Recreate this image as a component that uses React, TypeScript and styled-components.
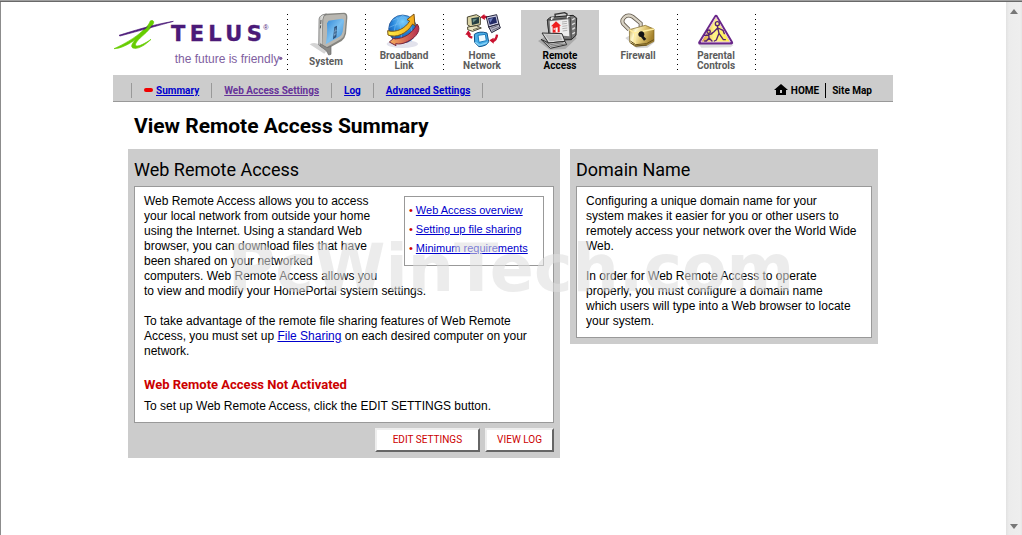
import React from "react";
import styled, { createGlobalStyle } from "styled-components";

const narrow = `Roboto, "Liberation Sans", sans-serif`;
const sans = `"Liberation Sans", Arial, sans-serif`;

const GlobalStyle = createGlobalStyle`
  * { box-sizing: border-box; }
  body { margin: 0; background: #fff; color: #000; font: 12px/15px ${sans}; }
  h1, h2, h3, p, ul { margin: 0; padding: 0; }
  a { color: #0000cc; }
`;

const Shell = styled.div`
  position: relative;
  display: flex;
  min-height: 100vh;
  border-top: 1px solid #a0a0a0;
`;

const Viewport = styled.div`
  flex: 1;
  min-width: 0;
  border-top: 1px solid #696969;
  box-shadow: inset 1px 0 #8c8c8c;
`;

const ScrollTrack = styled.div`
  display: flex;
  flex-direction: column;
  justify-content: space-between;
  align-items: center;
  width: 16px;
  padding: 7px 0 6px;
  border-top: 1px solid #696969;
  background: linear-gradient(90deg, #e2e2e2, #ececec 3px, #eeeeee 14px, #e6e6e6);
`;

const Page = styled.div`
  max-width: 780px;
  margin: 0 auto;
  padding-top: 8px;
`;

const Header = styled.header`
  display: flex;
  height: 65px;
`;

const Brand = styled.a`
  flex: 0 0 174px;
  color: inherit;
`;

const dots = `repeating-linear-gradient(#000 0 1px, transparent 1px 5px)`;

const Tabs = styled.nav`
  display: flex;
`;

const Tab = styled.a<{ $active?: boolean; $plain?: boolean }>`
  display: flex;
  flex-direction: column;
  align-items: center;
  width: 78px;
  padding-top: 2px;
  color: ${(p) => (p.$active ? "#000" : "#5c5c5c")};
  background: ${(p) =>
    p.$active ? "#ccc" : p.$plain ? "none" : `${dots} 0 4px / 1px 56px no-repeat`};
  font: bold 10px/10px ${narrow};
  text-align: center;
  text-decoration: none;
  white-space: pre-line;
`;

const TabsEnd = styled.span`
  width: 1px;
  background: ${dots} 0 4px / 1px 56px no-repeat;
`;

const NavBar = styled.nav`
  display: flex;
  align-items: center;
  justify-content: space-between;
  height: 27px;
  padding: 0 21px 0 18px;
  border-bottom: 1px solid #999;
  background: #ccc;
  font: bold 10px/15px ${narrow};
`;

const NavGroup = styled.div`
  display: flex;
  align-items: center;
  padding-top: 4px;
`;

const NavItem = styled.span`
  display: flex;
  align-items: center;
  gap: 3px;
  padding: 0 12px;
  border-left: 1px solid #999;

  &:last-child {
    border-right: 1px solid #999;
  }
`;

const NavLink = styled.a<{ $visited?: boolean }>`
  color: ${(p) => (p.$visited ? "#663399" : "#0000cc")};
`;

const Marker = styled.span`
  width: 9px;
  height: 4px;
  border-radius: 2px;
  background: #f00000;
`;

const SideLink = styled.a`
  display: flex;
  align-items: center;
  gap: 3px;
  padding: 0 6px;
  color: #000;
  text-decoration: none;

  & + & {
    padding-right: 0;
    border-left: 1px solid #000;
  }
`;

const Content = styled.main`
  padding: 8px 15px;
`;

const Title = styled.h1`
  padding: 1px 0 0 6px;
  font: bold 21px/30px ${narrow};
`;

const Columns = styled.div`
  display: grid;
  grid-template-columns: 432fr 308fr;
  align-items: start;
  gap: 10px;
  padding-top: 8px;
`;

const Panel = styled.section`
  padding: 6px;
  background: #ccc;
`;

const PanelTitle = styled.h2`
  padding: 1px 0 3px;
  font: 18px/27px ${narrow};
`;

const Box = styled.div`
  padding: 7px 9px 8px;
  border: 1px solid #999;
  background: #fff;
`;

const Text = styled.p`
  & + & {
    padding-top: 15px;
  }
`;

const Alert = styled.h3`
  padding: 17px 0 6px;
  color: #cc0000;
  font: bold 13px/17px ${narrow};
`;

const LinkList = styled.ul`
  float: right;
  width: 140px;
  height: 70px;
  margin: 2px 0 0 12px;
  padding: 4px;
  border: 1px solid #999;
  font-size: 11px;
  line-height: 19px;
  list-style: none;
`;

const LinkRow = styled.li`
  display: flex;
  gap: 3px;

  &::before {
    content: "•";
    color: #cc0000;
  }
`;

const Actions = styled.div`
  display: flex;
  justify-content: flex-end;
  gap: 5px;
  padding-top: 5px;
`;

const Button = styled.button`
  height: 24px;
  padding: 0 16px;
  border: 2px solid;
  border-color: #eee #666 #666 #eee;
  background: #fff;
  color: #cc0000;
  font: 10px/18px ${narrow};

  & + & {
    padding: 0 10px;
  }
`;

const Watermark = styled.div`
  position: absolute;
  top: 229px;
  left: 0;
  right: 0;
  color: rgba(221, 221, 221, 0.56);
  font: bold 65px/78px "DejaVu Sans", sans-serif;
  text-align: center;
  pointer-events: none;
`;

const Logo = () => (
  <svg width="174" height="64" viewBox="15 15 522 192" role="img" aria-label="TELUS">
    <path
      d="M18 131 C32 125 70 106 94 86 C112 71 124 58 126 49 C129 45 136 46 137 50 C139 57 121 78 102 94 C84 110 78 121 86 123 C95 124 111 115 129 103 C115 117 94 132 79 130 C66 129 70 116 84 102 C63 118 38 131 18 131 Z"
      fill="#66cc00"
      stroke="#66cc00"
      strokeWidth="2"
    />
    <path d="M33 91 C75 78 130 60 196 49 C150 62 95 77 36 93 Z" fill="#4b1a78" stroke="#4b1a78" strokeWidth="2" />
    <path d="M104 84 C120 70 132 57 133 50" fill="none" stroke="#66cc00" strokeWidth="7" />
    <text x="189" y="109" fill="#4b1a78" stroke="#4b1a78" strokeWidth="1" fontFamily="DejaVu Sans" fontWeight="bold" fontSize="63" letterSpacing="13">
      TELUS
    </text>
    <text x="466" y="76" fill="#4b1a78" fontFamily="Liberation Sans" fontSize="21">
      ®
    </text>
    <text x="200" y="173" fill="#80609f" fontFamily="Liberation Sans" fontSize="36">
      the future is friendly
    </text>
    <circle cx="518" cy="160" r="5" fill="#80609f" />
  </svg>
);

const SystemIcon = () => (
  <svg width="48" height="45" viewBox="51 21 144 135">
    <defs>
      <linearGradient id="sysFace" x1="0" y1="0" x2="1" y2="1">
        <stop offset="0" stopColor="#2d86d8" />
        <stop offset="0.5" stopColor="#7cc0f0" />
        <stop offset="1" stopColor="#3487d2" />
      </linearGradient>
      <linearGradient id="sysSide">
        <stop offset="0" stopColor="#b5b5b3" />
        <stop offset="0.5" stopColor="#e2e2df" />
        <stop offset="1" stopColor="#868684" />
      </linearGradient>
    </defs>
    <path d="M74 118 Q92 108 110 124 L128 134 L118 146 Z" fill="#d4d4d4" />
    <path d="M103 42 Q104 30 121 26 L178 23 Q188 24 187 38 L183 86 Q180 100 170 108 L131 130 L104 122 Z" fill="#858580" />
    <path d="M102 42 Q104 29 124 27 Q114 32 113 46 L112 127 L101 120 Z" fill="url(#sysSide)" stroke="#777" strokeWidth="2" />
    <path d="M123 31 L175 27 Q184 27 183 38 L179 84 Q177 96 168 102 L126 126 L112 122 L115 43 Q116 33 123 31 Z" fill="#b9b7b1" />
    <path d="M131 47 L171 41 Q178 42 177 50 L173 80 Q171 90 163 95 L122 118 Q128 92 126 55 Z" fill="url(#sysFace)" />
    <path d="M148 66 L156 62 L154 96 L144 103 Z" fill="#2c4f78" />
    <path d="M151 70 L149 94 M148 79 L155 76 M146 90 L154 86" stroke="#8ebbe0" strokeWidth="2" />
    <path d="M106 116 L126 128 L138 124 L138 148 L131 150 L124 137 L106 124 Z" fill="#8a8a87" stroke="#666" strokeWidth="2" />
    <path d="M108 45 L107 57 M107 61 L106 70" stroke="#555" strokeWidth="3" />
  </svg>
);

const BroadbandIcon = () => (
  <svg width="48" height="39" viewBox="285 21 144 117">
    <defs>
      <radialGradient id="globe" cx="0.5" cy="0.25" r="0.75">
        <stop offset="0" stopColor="#7cd2ff" />
        <stop offset="0.5" stopColor="#2584da" />
        <stop offset="1" stopColor="#123f93" />
      </radialGradient>
      <linearGradient id="gold">
        <stop offset="0" stopColor="#ffec45" />
        <stop offset="1" stopColor="#f4a819" />
      </linearGradient>
      <linearGradient id="coral">
        <stop offset="0" stopColor="#f8b05c" />
        <stop offset="1" stopColor="#b62c4f" />
      </linearGradient>
    </defs>
    <ellipse cx="352" cy="117" rx="47" ry="12" fill="#e2e2ec" />
    <circle cx="353" cy="72" r="42" fill="url(#globe)" stroke="#23508f" strokeWidth="2" />
    <path d="M313 67 Q353 45 394 60 M322 46 Q354 30 382 44 M353 31 Q320 60 328 108 M353 31 Q389 55 378 110 M335 36 Q356 70 346 115" fill="none" stroke="#74baf0" strokeWidth="2" />
    <path d="M308 77 C335 84 361 70 374 48 L366 44 L387 27 L390 63 L383 57 C366 87 332 100 309 90 Z" fill="url(#gold)" stroke="#7b5315" strokeWidth="3" strokeLinejoin="round" />
    <path d="M313 111 L328 98 L329 102 C358 100 382 86 396 57 C410 72 397 96 367 110 C353 117 342 118 332 116 L333 122 Z" fill="url(#coral)" stroke="#7a263a" strokeWidth="3" strokeLinejoin="round" />
  </svg>
);

const NetworkIcon = () => (
  <svg width="48" height="39" viewBox="54 21 144 117">
    <g fill="none" stroke="#c9122f" strokeWidth="7">
      <path d="M128 36 Q141 33 147 42" />
      <path d="M85 84 Q84 95 97 98" />
      <path d="M171 89 Q170 104 158 109" />
    </g>
    <path d="M121 37 L133 27 L135 45 Z M76 89 L85 76 L94 89 Z M148 106 L161 98 L161 116 Z" fill="#c9122f" />
    <path d="M82 36 L109 29 L121 36 L121 59 L93 66 L82 59 Z" fill="#d9d3a4" stroke="#4b4834" strokeWidth="3" />
    <path d="M94 40 L117 36 L117 55 L96 60 Z" fill="#263f42" />
    <path d="M98 43 L112 41 L99 53 Z" fill="#698f88" />
    <path d="M83 66 L109 62 L124 69 L98 79 L83 74 Z" fill="#e9e4bf" stroke="#4b4834" strokeWidth="3" />
    <path d="M99 74 L118 68" stroke="#77735a" strokeWidth="3" />
    <path d="M139 36 L170 29 L177 57 L146 66 Z" fill="#cdcde2" stroke="#24243b" strokeWidth="3" />
    <path d="M144 40 L167 35 L171 53 L149 59 Z" fill="#222a66" />
    <path d="M147 42 L159 39 L151 53 Z" fill="#7182c0" />
    <path d="M146 66 L177 57 L181 69 L155 83 Z" fill="#b8b8c9" stroke="#24243b" strokeWidth="3" />
    <path d="M152 70 L173 62 M156 76 L177 67" stroke="#4b4b5b" strokeWidth="2" />
    <path d="M103 88 Q118 77 141 84 L146 110 Q141 123 117 125 L104 112 Z" fill="#49aee8" stroke="#135389" strokeWidth="3" />
    <path d="M114 91 L136 88 L139 107 L117 112 Z" fill="#eefaff" stroke="#187abc" strokeWidth="3" />
    <path d="M106 112 L118 121 L142 113" fill="none" stroke="#8ad4f8" strokeWidth="4" />
  </svg>
);

const RemoteIcon = () => (
  <svg width="48" height="39" viewBox="288 21 144 117">
    <path d="M294 108 L321 91 L400 83 L410 100 L376 132 L329 134 Z" fill="#aaa" />
    <path d="M346 36 L345 28 L374 23 L381 27 L381 35" fill="none" stroke="#333" strokeWidth="4" />
    <path d="M322 45 L330 37 L399 31 L410 39 L408 91 L394 104 L329 106 Z" fill="#777" stroke="#202020" strokeWidth="3" />
    <path d="M322 45 L391 38 L394 103 L329 103 Z" fill="#777" stroke="#292929" strokeWidth="2" />
    <path d="M329 49 L385 43 L388 94 L332 89 Z" fill="#eee" />
    <path d="M333 64 L348 49 L363 62 L359 62 L359 82 L338 83 L338 64 Z" fill="#ee2020" />
    <path d="M346 68 L353 67 L353 82 L347 82 Z M341 69 L344 69 L344 75 L341 75 Z" fill="#fff" />
    <path d="M366 51 L381 49 M366 57 L381 55 M367 64 L382 62 M367 71 L382 69 M368 78 L382 76" stroke="#b3b3b3" strokeWidth="3" />
    <path d="M396 45 L404 40 M396 59 L405 54 M397 73 L405 68 M397 87 L405 82" stroke="#ddd" strokeWidth="4" />
    <path d="M306 84 L366 86 L375 109 L326 114 Z" fill="#ddd" stroke="#303030" strokeWidth="3" />
    <path d="M313 88 L360 90 L367 105 L329 109 Z" fill="#bbb" />
    <path d="M303 103 L326 114 L375 109 L380 119 L331 130 Z" fill="#c9c9c9" stroke="#303030" strokeWidth="3" />
    <path d="M318 110 L332 119 L370 113 M313 108 L331 124 L376 117" fill="none" stroke="#555" strokeWidth="2" />
    <path d="M335 45 L335 39 L341 38 M382 40 L383 34 L389 34" fill="none" stroke="#eee" strokeWidth="4" />
  </svg>
);

const FirewallIcon = () => (
  <svg width="48" height="39" viewBox="57 21 144 117">
    <defs>
      <linearGradient id="brass" x1="0" y1="0" x2="1" y2="0.35">
        <stop offset="0" stopColor="#b8983c" />
        <stop offset="0.3" stopColor="#fff8cc" />
        <stop offset="0.6" stopColor="#e3c976" />
        <stop offset="1" stopColor="#a5822c" />
      </linearGradient>
    </defs>
    <path d="M91 99 L111 87 L180 110 L158 128 L125 130 Z" fill="#d5d5d5" />
    <path d="M102 74 L85 57 Q78 47 88 37 Q98 27 113 35 L137 55 L137 73" fill="none" stroke="#62594c" strokeWidth="12" />
    <path d="M102 74 L85 57 Q78 47 88 37 Q98 27 113 35 L137 55 L137 73" fill="none" stroke="#d9d3c5" strokeWidth="7" />
    <path d="M103 74 L151 61 L177 72 L177 109 L155 121 L120 124 L104 112 Z" fill="url(#brass)" stroke="#79601f" strokeWidth="2" />
    <path d="M103 74 L119 84 L177 72 M119 84 L120 123" fill="none" stroke="#ffed9e" strokeWidth="4" />
    <path d="M106 108 L122 119 L155 116 L176 104 M107 114 L123 123 L155 120" fill="none" stroke="#65501b" strokeWidth="3" />
    <path d="M133 81 Q140 76 147 83 Q150 89 146 94 L154 102 L147 107 L138 96 Q129 94 130 86 Z" fill="#141414" />
  </svg>
);

const ParentalIcon = () => (
  <svg width="48" height="39" viewBox="291 21 144 117">
    <defs>
      <linearGradient id="warn">
        <stop offset="0" stopColor="#d99a38" />
        <stop offset="0.45" stopColor="#fff48a" />
        <stop offset="1" stopColor="#fff041" />
      </linearGradient>
    </defs>
    <path d="M310 116 L416 119 L407 127 L319 128 Z" fill="#ddd" />
    <path d="M363 35 L409 113 L315 113 Z" fill="#692789" stroke="#692789" strokeWidth="11" strokeLinejoin="round" />
    <path d="M363 37 L406 111 L318 111 Z" fill="url(#warn)" stroke="#e6c2e7" strokeWidth="3" strokeLinejoin="round" />
    <g fill="none" stroke="#542272" strokeWidth="4" strokeLinecap="round" strokeLinejoin="round">
      <circle cx="367" cy="56" r="6" />
      <path d="M367 63 L372 85 L385 104 L391 104 M372 85 L364 105 L358 108 M368 69 L356 81 L349 86 M369 69 L384 76 L388 86" />
      <circle cx="341" cy="80" r="5" />
      <path d="M341 86 L342 99 L334 108 L329 108 M342 99 L351 108 M329 91 L341 90 L351 86" />
    </g>
  </svg>
);

const HomeIcon = () => (
  <svg width="14" height="12" viewBox="0 0 14 12" aria-hidden="true">
    <path d="M7 0 L14 6 H12 V11 H2 V6 H0 Z" />
    <path d="M6 6 H8 V9 H6 Z" fill="#ccc" />
  </svg>
);

const Arrow = ({ down }: { down?: boolean }) => (
  <svg width="8" height="5" viewBox="0 0 8 5" aria-hidden="true">
    <path d={down ? "M0 0 H8 L4 5 Z" : "M4 0 L8 5 H0 Z"} fill="#777" />
  </svg>
);

const tabs = [
  { label: "System", Icon: SystemIcon },
  { label: "Broadband\nLink", Icon: BroadbandIcon },
  { label: "Home\nNetwork", Icon: NetworkIcon },
  { label: "Remote\nAccess", Icon: RemoteIcon, active: true },
  { label: "Firewall", Icon: FirewallIcon, plain: true },
  { label: "Parental\nControls", Icon: ParentalIcon },
];

export default function App() {
  return (
    <Shell>
      <GlobalStyle />
      <Viewport>
        <Page>
          <Header>
            <Brand href="#">
              <Logo />
            </Brand>
            <Tabs>
              {tabs.map(({ label, Icon, active, plain }) => (
                <Tab key={label} href="#" $active={active} $plain={plain}>
                  <Icon />
                  {label}
                </Tab>
              ))}
              <TabsEnd />
            </Tabs>
          </Header>
          <NavBar>
            <NavGroup>
              <NavItem>
                <Marker />
                <NavLink href="#">Summary</NavLink>
              </NavItem>
              <NavItem>
                <NavLink href="#" $visited>Web Access Settings</NavLink>
              </NavItem>
              <NavItem>
                <NavLink href="#">Log</NavLink>
              </NavItem>
              <NavItem>
                <NavLink href="#">Advanced Settings</NavLink>
              </NavItem>
            </NavGroup>
            <NavGroup>
              <SideLink href="#">
                <HomeIcon />
                HOME
              </SideLink>
              <SideLink href="#">Site Map</SideLink>
            </NavGroup>
          </NavBar>
          <Content>
            <Title>View Remote Access Summary</Title>
            <Columns>
              <Panel>
                <PanelTitle>Web Remote Access</PanelTitle>
                <Box>
                  <LinkList>
                    <LinkRow><a href="#">Web Access overview</a></LinkRow>
                    <LinkRow><a href="#">Setting up file sharing</a></LinkRow>
                    <LinkRow><a href="#">Minimum requirements</a></LinkRow>
                  </LinkList>
                  <Text>
                    Web Remote Access allows you to access
                    <br />
                    your local network from outside your home
                    <br />
                    using the Internet. Using a standard Web
                    <br />
                    browser, you can download files that have
                    <br />
                    been shared on your networked
                    <br />
                    computers. Web Remote Access allows you
                    <br />
                    to view and modify your HomePortal system settings.
                  </Text>
                  <Text>
                    To take advantage of the remote file sharing features of Web Remote
                    <br />
                    Access, you must set up <a href="#">File Sharing</a> on each desired computer on your
                    <br />
                    network.
                  </Text>
                  <Alert>Web Remote Access Not Activated</Alert>
                  <Text>To set up Web Remote Access, click the EDIT SETTINGS button.</Text>
                </Box>
                <Actions>
                  <Button type="button">EDIT SETTINGS</Button>
                  <Button type="button">VIEW LOG</Button>
                </Actions>
              </Panel>
              <Panel>
                <PanelTitle>Domain Name</PanelTitle>
                <Box>
                  <Text>
                    Configuring a unique domain name for your
                    <br />
                    system makes it easier for you or other users to
                    <br />
                    remotely access your network over the World Wide
                    <br />
                    Web.
                  </Text>
                  <Text>
                    In order for Web Remote Access to operate
                    <br />
                    properly, you must configure a domain name
                    <br />
                    which users will type into a Web browser to locate
                    <br />
                    your system.
                  </Text>
                </Box>
              </Panel>
            </Columns>
          </Content>
        </Page>
      </Viewport>
      <ScrollTrack>
        <Arrow />
        <Arrow down />
      </ScrollTrack>
      <Watermark>PcWinTech.com</Watermark>
    </Shell>
  );
}
